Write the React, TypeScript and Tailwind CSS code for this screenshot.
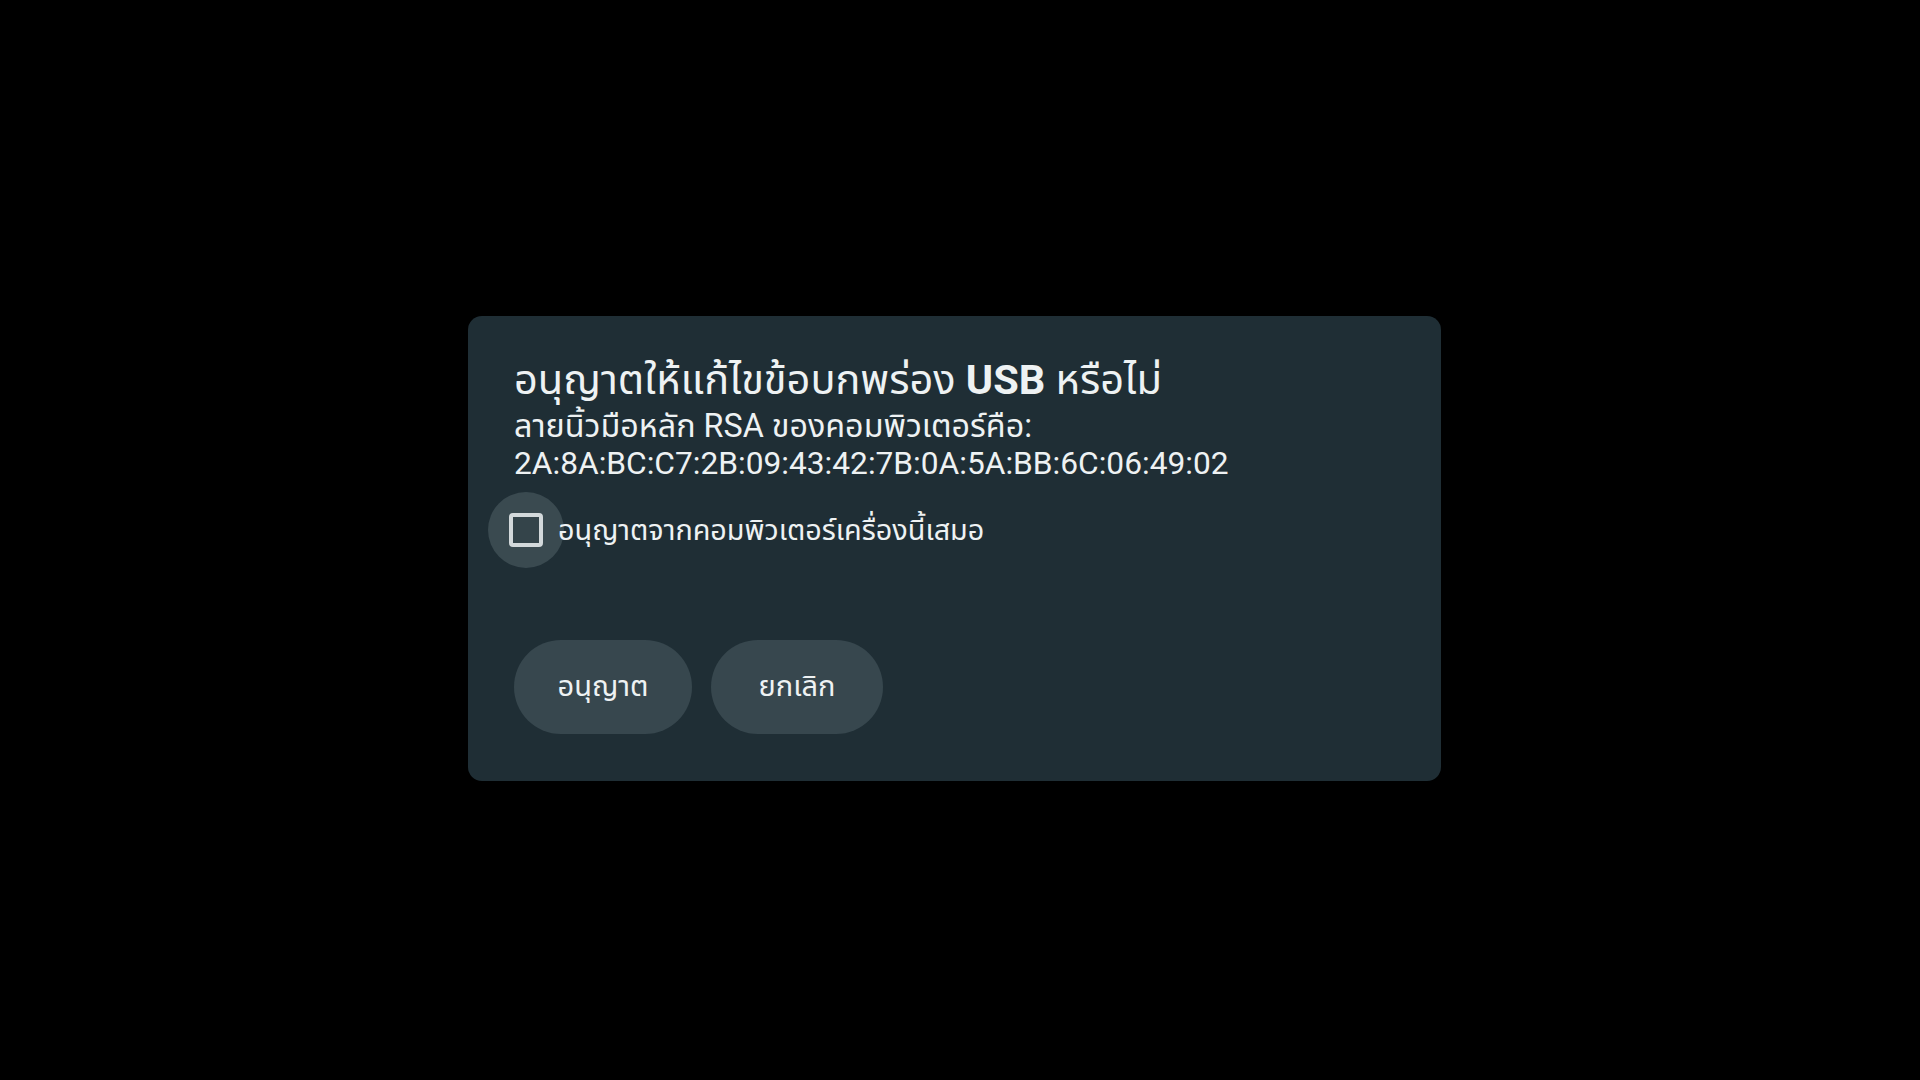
export default function App() {
  return (
    <div
      className="h-screen w-full bg-black pl-[468px] pt-[316px]"
      style={{ fontFamily: 'Roboto, "Noto Sans Thai", "Noto Sans", sans-serif' }}
    >
      {/* Dialog */}
      <div className="flex h-[465px] w-[973px] flex-col rounded-[14px] bg-[#1f2e35] pl-[46px] pt-[37px] text-[#eef2f3]">
        <h1 className="text-[41.5px] leading-[54px]">
          อนุญาตให้แก้ไขข้อบกพร่อง <span className="font-bold">USB</span> หรือไม่
        </h1>
        <p className="text-[32.3px] leading-[38px]">ลายนิ้วมือหลัก RSA ของคอมพิวเตอร์คือ:</p>
        <p className="text-[31.7px] leading-[38px]">2A:8A:BC:C7:2B:09:43:42:7B:0A:5A:BB:6C:06:49:02</p>

        {/* Checkbox row */}
        <div className="-ml-[26px] mt-[9px] flex items-center">
          <div className="flex h-[76px] w-[76px] items-center justify-center rounded-full bg-[#3a4a50]">
            <div className="h-[34px] w-[34px] rounded-[4px] border-[4px] border-[#d3d9db] bg-[#34444a]" />
          </div>
          <span className="ml-[-6px] text-[28.8px] leading-[38px]">อนุญาตจากคอมพิวเตอร์เครื่องนี้เสมอ</span>
        </div>

        {/* Buttons */}
        <div className="mt-[72px] flex gap-[19px]">
          <button className="flex h-[94px] w-[178px] items-center justify-center rounded-full bg-[#37474e] text-[29px]">
            อนุญาต
          </button>
          <button className="flex h-[94px] w-[172px] items-center justify-center rounded-full bg-[#37474e] text-[29px]">
            ยกเลิก
          </button>
        </div>
      </div>
    </div>
  );
}
